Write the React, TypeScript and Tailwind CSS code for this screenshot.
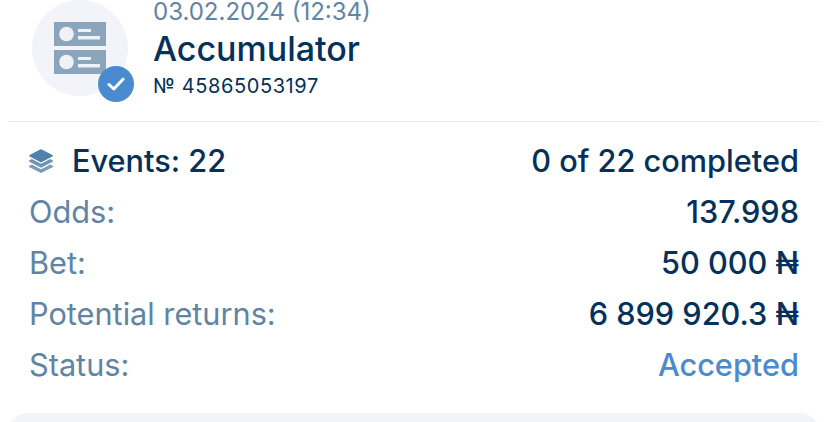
const labelClass = "text-[30.7px] leading-[51px] text-[#5f84a4]";
const valueClass = "text-[30.7px] leading-[51px] text-[#04305a]";

const rows = [
  { label: "Odds:", value: "137.998" },
  { label: "Bet:", value: "50 000 ₦" },
  { label: "Potential returns:", value: "6 899 920.3 ₦" },
];

function CouponIcon() {
  return (
    <svg width="52" height="52" viewBox="0 0 52 52" className="block">
      <rect x="0" y="0" width="52" height="24" fill="#8ba5bd" />
      <rect x="0" y="28" width="52" height="24" fill="#8ba5bd" />
      <circle cx="12.5" cy="12" r="7.3" fill="#eef1f6" />
      <circle cx="12.5" cy="40" r="7.3" fill="#eef1f6" />
      <rect x="24" y="7" width="13" height="3" fill="#eef1f6" />
      <rect x="24" y="14" width="22" height="3.5" fill="#eef1f6" />
      <rect x="24" y="35" width="13" height="3" fill="#eef1f6" />
      <rect x="24" y="42" width="22" height="3.5" fill="#eef1f6" />
    </svg>
  );
}

function LayersIcon() {
  return (
    <svg width="24" height="24" viewBox="0 0 24 24" className="block">
      <path d="M12 1 L23 6.8 L12 12.6 L1 6.8 Z" fill="#4f82ab" stroke="#4f82ab" strokeWidth="1.6" strokeLinejoin="round" />
      <path d="M2.8 10 L12 14.8 L21.2 10 L24 11.6 L24 12.6 L12 18.8 L0 12.6 L0 11.6 Z" fill="#6f95b6" />
      <path d="M2.8 15.4 L12 20.2 L21.2 15.4 L24 17 L24 18 L12 24 L0 18 L0 17 Z" fill="#7d9cb8" />
    </svg>
  );
}

export default function App() {
  return (
    <div className="w-[828px] h-[422px] bg-white overflow-hidden font-['Inter',sans-serif]">
      <div className="h-[121px] flex pl-8">
        <div className="relative w-24 h-24 rounded-full bg-[#f3f4f9] flex items-center justify-center shrink-0">
          <CouponIcon />
          <div className="absolute left-[66px] top-[66px] w-9 h-9 rounded-full bg-[#4a8bd0] flex items-center justify-center">
            <svg width="18" height="14" viewBox="0 0 18 14" fill="none">
              <path d="M2 7.5 L6.8 12 L16 2.2" stroke="white" strokeWidth="3" strokeLinecap="round" strokeLinejoin="round" />
            </svg>
          </div>
        </div>
        <div className="ml-[25px]">
          <div className="text-[24px] leading-[24px] text-[#5f84a4]">03.02.2024 (12:34)</div>
          <div className="text-[34px] leading-[50px] font-medium text-[#04305a]">Accumulator</div>
          <div className="text-[20px] leading-[24px] tracking-[0.6px] text-[#04305a]">№ 45865053197</div>
        </div>
      </div>
      <div className="mx-2 h-px bg-[#e8eaee]" />
      <div className="px-[29px] pt-[13px]">
        <div className="flex items-center justify-between">
          <div className="flex items-center gap-[19px]">
            <LayersIcon />
            <span className={`${valueClass} font-medium`}>Events: 22</span>
          </div>
          <span className={`${valueClass} font-medium`}>0 of 22 completed</span>
        </div>
        {rows.map((row) => (
          <div key={row.label} className="flex items-center justify-between">
            <span className={labelClass}>{row.label}</span>
            <span className={`${valueClass} font-medium`}>{row.value}</span>
          </div>
        ))}
        <div className="flex items-center justify-between">
          <span className={labelClass}>Status:</span>
          <span className="text-[30.7px] leading-[51px] font-medium text-[#4a8bd0]">Accepted</span>
        </div>
      </div>
      <div className="mx-2 mt-[23px] h-20 rounded-t-[20px] bg-[#f3f4f9]" />
    </div>
  );
}
